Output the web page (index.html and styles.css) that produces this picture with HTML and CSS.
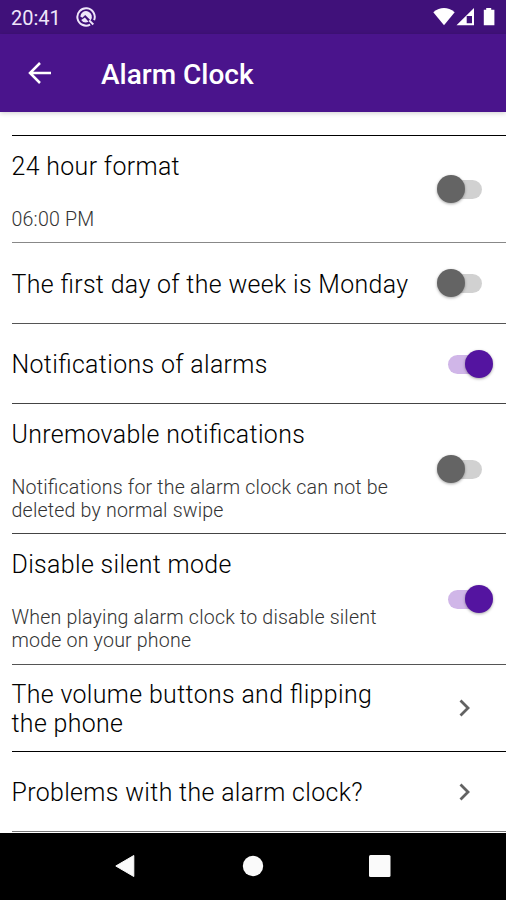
FILE: index.html
```html
<!DOCTYPE html>
<html lang="en">
<head>
<meta charset="utf-8">
<title>Alarm Clock</title>
<link rel="stylesheet" href="styles.css">
</head>
<body>
<div class="status">
  <span class="time">20:41</span>
  <svg class="q" width="20" height="20" viewBox="0 0 20 20"><path d="M14.1 17.6A8.7 8.7 0 1 1 18.1 13.2M13.2 13.4L17.3 17.5" fill="none" stroke="#efe6fa" stroke-width="2"/><path d="M4.3 9.6A5.8 5.8 0 1 1 14.7 13.4L9.2 7.9L6.4 10.7Z" fill="#efe6fa"/><path d="M5.2 13L8.9 10.4L12.5 14.8A5.8 5.8 0 0 1 5.2 13Z" fill="#efe6fa"/></svg>
  <svg class="signals" width="64" height="20" viewBox="0 0 64 20"><path d="M.3 4.2Q11-4.2 21.7 4.2L11 17.3Z" fill="#fff"/><path fill-rule="evenodd" d="M23.5 17.3L41 0V17.3ZM33.7 15.2H39V8H33.7Z" fill="#fff"/><path d="M53.2 0h5v1.8h3.2v15.5H50.8V1.8h2.4Z" fill="#fff"/></svg>
</div>
<header class="bar">
  <svg class="back" width="24" height="22" viewBox="0 0 24 22"><path d="M23 11H2M12 1L2 11L12 21" fill="none" stroke="#fff" stroke-width="2.5"/></svg>
  <h1>Alarm Clock</h1>
</header>
<main class="list">
  <section class="row detailed"><div class="copy"><h2>24 hour format</h2><p>06:00 PM</p></div><i class="switch"></i></section>
  <section class="row plain light"><div class="copy"><h2>The first day of the week is Monday</h2></div><i class="switch"></i></section>
  <section class="row plain"><div class="copy"><h2>Notifications of alarms</h2></div><i class="switch on"></i></section>
  <section class="row detailed long"><div class="copy"><h2>Unremovable notifications</h2><p>Notifications for the alarm clock can not be<br>deleted by normal swipe</p></div><i class="switch"></i></section>
  <section class="row detailed long"><div class="copy"><h2>Disable silent mode</h2><p>When playing alarm clock to disable silent<br>mode on your phone</p></div><i class="switch on"></i></section>
  <section class="row double"><div class="copy"><h2>The volume buttons and flipping<br>the phone</h2></div><svg class="chevron" width="12" height="18" viewBox="0 0 12 18"><path d="M1.5 1.5L9 9L1.5 16.5" fill="none" stroke="#626262" stroke-width="2.8"/></svg></section>
  <section class="row plain last"><div class="copy"><h2>Problems with the alarm clock?</h2></div><svg class="chevron" width="12" height="18" viewBox="0 0 12 18"><path d="M1.5 1.5L9 9L1.5 16.5" fill="none" stroke="#626262" stroke-width="2.8"/></svg></section>
</main>
<nav class="nav">
  <svg width="22" height="24" viewBox="0 0 22 24"><path d="M.8 12L18.8 1.5V22.5Z" fill="#fafafa" stroke="#fafafa" stroke-linejoin="round"/></svg>
  <svg width="22" height="22" viewBox="0 0 22 22"><circle cx="11" cy="11" r="10.2" fill="#fafafa"/></svg>
  <svg width="22" height="22" viewBox="0 0 22 22"><rect width="21.5" height="22" rx="1.5" fill="#fafafa"/></svg>
</nav>
</body>
</html>
```
FILE: styles.css
```css
* { box-sizing: border-box; }
body { margin: 0; width: 506px; height: 900px; overflow: hidden; background: #fff; font-family: Roboto, sans-serif; color: #000; }
h1, h2, p { margin: 0; white-space: nowrap; }
.status { height: 34px; background: #40117a; display: flex; align-items: center; padding: 0 9px 0 11px; color: #efe6fa; }
.time { font-size: 20px; line-height: 34px; width: 65px; padding-top: 1px; }
.signals { margin: 1px 0 0 auto; }
.bar { position: relative; height: 78px; background: #4a148c; box-shadow: 0 1px 5px rgba(0,0,0,.2); display: flex; align-items: center; padding-left: 28px; color: #fff; }
.back { margin-right: 49px; }
.bar h1 { font-size: 28px; font-weight: 500; line-height: 32px; padding-top: 3px; }
.list { margin-left: 11.5px; padding-top: 23px; height: 721px; }
.row { display: flex; border-top: 1px solid #000; padding-right: 13px; }
.list .row:first-child { height: 107px; }
.plain { height: 80px; align-items: center; border-color: #555; }
.plain.light { height: 81px; border-color: #888; }
.plain .copy { padding-top: 3px; }
.long { height: 130px; border-color: #444; }
.long + .long { height: 131px; }
.double { height: 87px; align-items: center; border-color: #555; }
.double .copy { padding-top: 2px; }
.row.last { height: 81px; border-color: #000; border-bottom: 1px solid #777; }
.copy { flex: 1; }
.detailed .copy { padding-top: 16px; }
h2 { font-size: 24.9px; line-height: 29.5px; font-weight: 300; letter-spacing: .36px; font-feature-settings: "liga" 1; }
p { margin-top: 26px; font-size: 19.6px; line-height: 23px; font-weight: 300; color: #333; letter-spacing: .18px; font-feature-settings: "liga" 1; }
.switch { position: relative; align-self: center; width: 34px; height: 19px; margin: 1px 11px 0 0; border-radius: 10px; background: #d1d1d1; }
.switch::after { content: ""; position: absolute; width: 28px; height: 28px; left: -11px; top: -5px; border-radius: 50%; background: #646464; box-shadow: 0 1px 3px rgba(0,0,0,.35); }
.switch.on { background: #d0b6e8; }
.switch.on::after { left: 17px; background: #5414a0; }
.chevron { margin-right: 22.5px; }
.nav { height: 67px; background: #000; display: flex; align-items: center; justify-content: space-between; padding: 0 115px 1px; }
```
